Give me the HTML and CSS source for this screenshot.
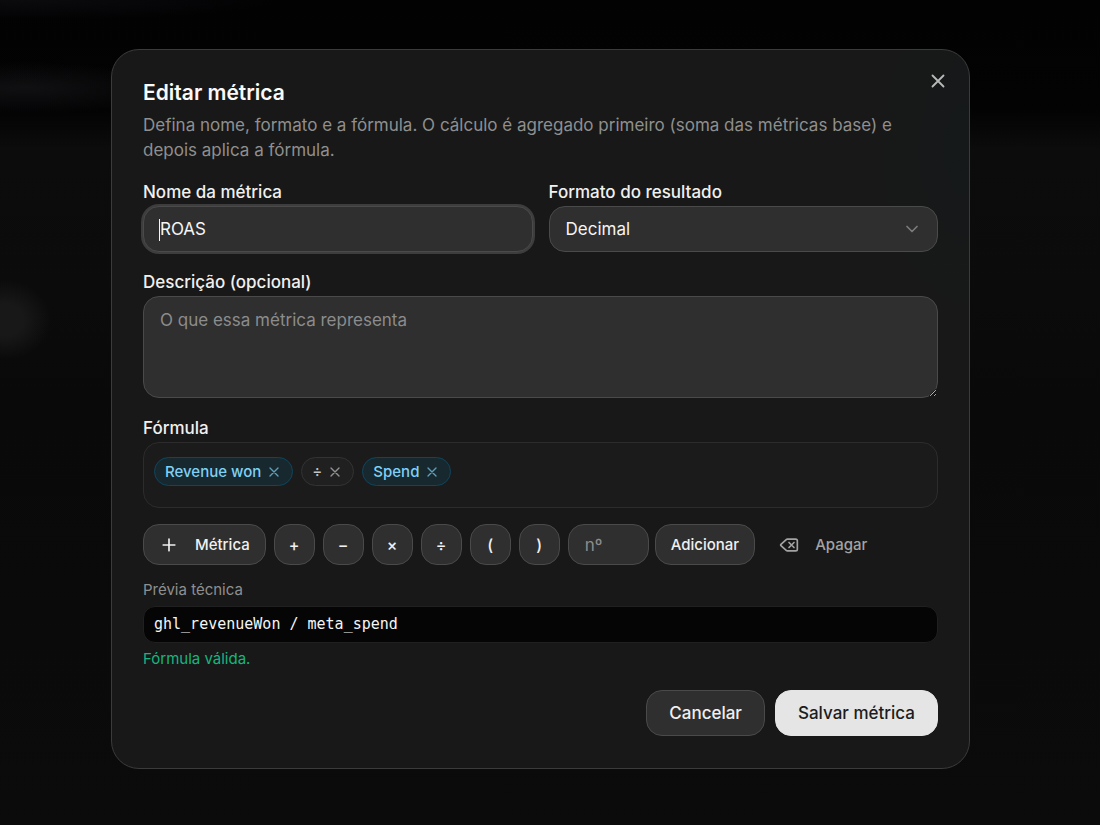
FILE: index.html
```html
<!DOCTYPE html>
<html lang="pt-BR">
<head>
<meta charset="utf-8">
<meta name="viewport" content="width=device-width, initial-scale=1">
<title>Editar métrica</title>
<link rel="stylesheet" href="styles.css">
</head>
<body>
<main class="backdrop">
  <form class="dialog" role="dialog" aria-modal="true" aria-labelledby="dialog-title">
    <button class="close" type="button" aria-label="Fechar">
      <svg viewBox="0 0 24 24"><path d="M18 6 6 18M6 6l12 12"/></svg>
    </button>
    <header class="heading">
      <h1 class="title" id="dialog-title">Editar métrica</h1>
      <p class="description">Defina nome, formato e a fórmula. O cálculo é agregado primeiro (soma das métricas base) e depois aplica a fórmula.</p>
    </header>
    <div class="columns">
      <div class="field">
        <label class="label" for="name">Nome da métrica</label>
        <div class="input-wrap">
          <input class="control control-focused" id="name" type="text" value="ROAS">
          <span class="caret"></span>
        </div>
      </div>
      <div class="field">
        <label class="label" for="format">Formato do resultado</label>
        <div class="input-wrap">
          <select class="control select" id="format">
            <option>Decimal</option>
          </select>
          <svg class="chevron" viewBox="0 0 24 24"><path d="m6 9 6 6 6-6"/></svg>
        </div>
      </div>
    </div>
    <div class="field">
      <label class="label" for="details">Descrição (opcional)</label>
      <textarea class="control textarea" id="details" placeholder="O que essa métrica representa"></textarea>
    </div>
    <section class="formula">
      <div class="field">
        <h2 class="label">Fórmula</h2>
        <div class="tokens">
          <span class="token token-metric">Revenue won
            <button class="token-remove" type="button" aria-label="Remover Revenue won"><svg viewBox="0 0 24 24"><path d="M18 6 6 18M6 6l12 12"/></svg></button>
          </span>
          <span class="token">÷
            <button class="token-remove" type="button" aria-label="Remover ÷"><svg viewBox="0 0 24 24"><path d="M18 6 6 18M6 6l12 12"/></svg></button>
          </span>
          <span class="token token-metric">Spend
            <button class="token-remove" type="button" aria-label="Remover Spend"><svg viewBox="0 0 24 24"><path d="M18 6 6 18M6 6l12 12"/></svg></button>
          </span>
        </div>
      </div>
      <div class="toolbar">
        <button class="tool tool-wide" type="button"><svg viewBox="0 0 24 24"><path d="M5 12h14M12 5v14"/></svg>Métrica</button>
        <button class="tool" type="button">+</button>
        <button class="tool" type="button">−</button>
        <button class="tool" type="button">×</button>
        <button class="tool" type="button">÷</button>
        <button class="tool" type="button">(</button>
        <button class="tool" type="button">)</button>
        <div class="number-group">
          <input class="control number" type="text" inputmode="decimal" placeholder="nº" aria-label="Número">
          <button class="tool tool-wide" type="button">Adicionar</button>
        </div>
        <button class="tool tool-wide tool-ghost" type="button"><svg viewBox="0 0 24 24"><path d="M10 5a2 2 0 0 0-1.344.519l-6.328 5.74a1 1 0 0 0 0 1.481l6.328 5.741A2 2 0 0 0 10 19h10a2 2 0 0 0 2-2V7a2 2 0 0 0-2-2zM12 9l6 6M18 9l-6 6"/></svg>Apagar</button>
      </div>
      <div class="preview">
        <p class="note">Prévia técnica</p>
        <code class="code">ghl_revenueWon / meta_spend</code>
        <p class="note note-valid">Fórmula válida.</p>
      </div>
    </section>
    <footer class="actions">
      <button class="action" type="button">Cancelar</button>
      <button class="action action-primary" type="submit">Salvar métrica</button>
    </footer>
  </form>
</main>
</body>
</html>
```
FILE: styles.css
```css
* { box-sizing: border-box; }

body {
  margin: 0;
  background: #0a0a0a;
  color: #f5f5f5;
  font-family: Inter, "Liberation Sans", sans-serif;
  font-size: 17px;
}

h1, h2, p { margin: 0; }

button, input, select, textarea { font: inherit; color: inherit; }

svg {
  fill: none;
  stroke: currentColor;
  stroke-width: 2;
  stroke-linecap: round;
  stroke-linejoin: round;
}

.backdrop {
  display: grid;
  align-items: start;
  justify-items: center;
  min-height: 100vh;
  padding: 49px 130px 49px 111px;
  background:
    radial-gradient(ellipse 150px 26px at 25px 88px, #101012, transparent),
    radial-gradient(ellipse 46px 40px at 5px 320px, #181818 40%, transparent),
    radial-gradient(ellipse 260px 20px at 20px 0, #0b0b0e, transparent),
    linear-gradient(#020203 0, #030304 110px, #0c0c0d 150px, #0b0b0b 300px, #090909 400px, #0b0b0b 100%);
}

.dialog {
  position: relative;
  display: flex;
  flex-direction: column;
  width: 100%;
  max-width: 859px;
  padding: 32px 31px;
  gap: 20px;
  border: 1px solid #3b3b3b;
  border-radius: 28px;
  background: radial-gradient(ellipse 90px 160px at 100% 100px, #15191a, #181818);
}

.close {
  position: absolute;
  top: 20px;
  right: 20px;
  display: flex;
  padding: 0;
  border: 0;
  background: none;
  color: #b9b9b9;
}

.close svg { width: 22px; height: 22px; }

.heading { display: grid; gap: 9px; margin-bottom: -1px; }

.title { font-size: 21px; line-height: 22px; font-weight: 600; color: #fafafa; }

.description { line-height: 25px; color: #8f8f8f; }

.columns { display: grid; grid-template-columns: 1fr 1fr; gap: 16px; }

.field { display: grid; gap: 4px; }

.label { font-size: 17px; line-height: 20px; font-weight: 500; color: #f0f0f0; }

.input-wrap { position: relative; display: grid; }

.control {
  width: 100%;
  height: 46px;
  padding: 0 16px;
  border: 1px solid #4a4a4a;
  border-radius: 16px;
  outline: 0;
  background: #2f2f2f;
}

.control::placeholder { color: #8c8c8c; opacity: 1; }

.control-focused { box-shadow: 0 0 0 2px #3d3d3d; }

.caret {
  position: absolute;
  top: 13px;
  left: 16px;
  width: 1px;
  height: 22px;
  background: #f5f5f5;
}

.select { appearance: none; }

.chevron {
  position: absolute;
  top: 13px;
  right: 16px;
  width: 20px;
  height: 20px;
  color: #7c7c7c;
  pointer-events: none;
}

.textarea {
  display: block;
  height: 102px;
  padding: 10px 16px;
  line-height: 26px;
  resize: vertical;
}

.formula { display: grid; gap: 16px; }

.tokens {
  display: flex;
  align-items: flex-start;
  flex-wrap: wrap;
  gap: 8px;
  min-height: 66px;
  padding: 14px 10px;
  border: 1px solid #2c2c2c;
  border-radius: 16px;
  background: #1b1b1b;
}

.token {
  display: inline-flex;
  align-items: center;
  gap: 5px;
  height: 29px;
  padding: 0 10px;
  border: 1px solid #333;
  border-radius: 15px;
  background: #202020;
  color: #c4c4c4;
  font-size: 15px;
  font-weight: 500;
}

.token-metric { border-color: #11455c; background: #17282f; color: #7fd0f5; }

.token-remove { display: flex; padding: 0; border: 0; background: none; opacity: 0.7; }

.token-remove svg { width: 16px; height: 16px; }

.toolbar { display: flex; flex-wrap: wrap; gap: 8px; }

.tool {
  display: inline-flex;
  align-items: center;
  justify-content: center;
  width: 41px;
  height: 41px;
  padding: 0;
  border: 1px solid #4a4a4a;
  border-radius: 16px;
  background: #2f2f2f;
  color: #f0f0f0;
  font-size: 16px;
  font-weight: 500;
}

.tool-wide { width: auto; padding: 0 15px; gap: 16px; font-size: 15px; }

.tool-wide svg { width: 20px; height: 20px; }

.tool-ghost { border-color: transparent; background: none; color: #a3a3a3; }

.number-group { display: flex; gap: 6px; }

.number { width: 81px; height: 41px; }

.preview { display: grid; gap: 7px; padding-bottom: 2px; }

.note { font-size: 15px; line-height: 18px; color: #8f8f8f; }

.note-valid { color: #16b57f; }

.code {
  padding: 0 10px;
  border: 1px solid #202020;
  border-radius: 12px;
  background: #050505;
  font-family: "DejaVu Sans Mono", monospace;
  font-size: 15px;
  line-height: 35px;
}

.actions { display: flex; justify-content: flex-end; gap: 10px; }

.action {
  height: 46px;
  padding: 0 22px;
  border: 1px solid #4a4a4a;
  border-radius: 16px;
  background: #2f2f2f;
  color: #f0f0f0;
  font-weight: 500;
}

.action-primary { border-color: #e5e5e5; background: #e5e5e5; color: #1c1c1c; }
```
